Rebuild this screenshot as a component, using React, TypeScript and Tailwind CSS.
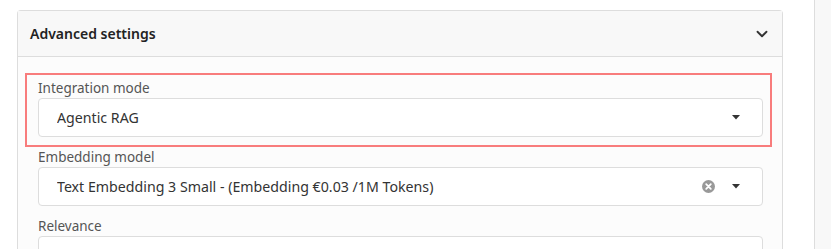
import { ChevronDown } from "lucide-react";

function Caret() {
  return (
    <svg width="8" height="5" viewBox="0 0 8 5" className="text-[#333]">
      <path d="M0 0h8L4 4.5z" fill="currentColor" />
    </svg>
  );
}

function ClearIcon() {
  return (
    <svg width="13" height="13" viewBox="0 0 13 13">
      <circle cx="6.5" cy="6.5" r="6.5" fill="#999" />
      <path d="M4.2 4.2l4.6 4.6M8.8 4.2l-4.6 4.6" stroke="#fff" strokeWidth="1.8" strokeLinecap="round" />
    </svg>
  );
}

function Field({
  label,
  value,
  clearable,
  highlight,
}: {
  label: string;
  value?: string;
  clearable?: boolean;
  highlight?: boolean;
}) {
  return (
    <div className="relative">
      {highlight && (
        <div className="pointer-events-none absolute -top-[5px] -left-[13px] -right-[9px] -bottom-[10px] border-2 border-[#f87c7c]" />
      )}
      <div className="h-5 text-[13.5px] leading-5 text-[#555]">{label}</div>
      <div className="flex h-[39px] items-center rounded-[4px] border border-[#ddd] bg-white pl-[18px] pr-[22px]">
        <span className="flex-1 truncate text-[14.2px] text-[#333]">{value}</span>
        {clearable && (
          <span className="mr-[17px]">
            <ClearIcon />
          </span>
        )}
        <Caret />
      </div>
    </div>
  );
}

export default function App() {
  return (
    <div
      className="flex h-[249px] w-[831px] overflow-hidden bg-white"
      style={{ fontFamily: "'Noto Sans', 'Open Sans', sans-serif" }}
    >
      <div className="w-[814px] pl-[17px] pr-[31px] pt-[10px]">
        <div className="h-[260px] rounded-t-[4px] border border-b-0 border-[#ddd] bg-[#fcfcfc]">
          <div className="flex h-[46px] items-center justify-between border-b border-[#ddd] bg-[#f8f8f8] pl-[12px] pr-[11px]">
            <span className="text-[14px] font-semibold text-[#222]">Advanced settings</span>
            <ChevronDown size={18} strokeWidth={2.5} className="text-[#333]" />
          </div>
          <div className="flex flex-col gap-[10px] pl-[20px] pr-[19px] pt-[21px]">
            <Field label="Integration mode" value="Agentic RAG" highlight />
            <Field
              label="Embedding model"
              value="Text Embedding 3 Small - (Embedding €0.03 /1M Tokens)"
              clearable
            />
            <Field label="Relevance" />
          </div>
        </div>
      </div>
      <div className="flex-1 border-l border-[#ddd] bg-[#f8f8f8]" />
    </div>
  );
}
